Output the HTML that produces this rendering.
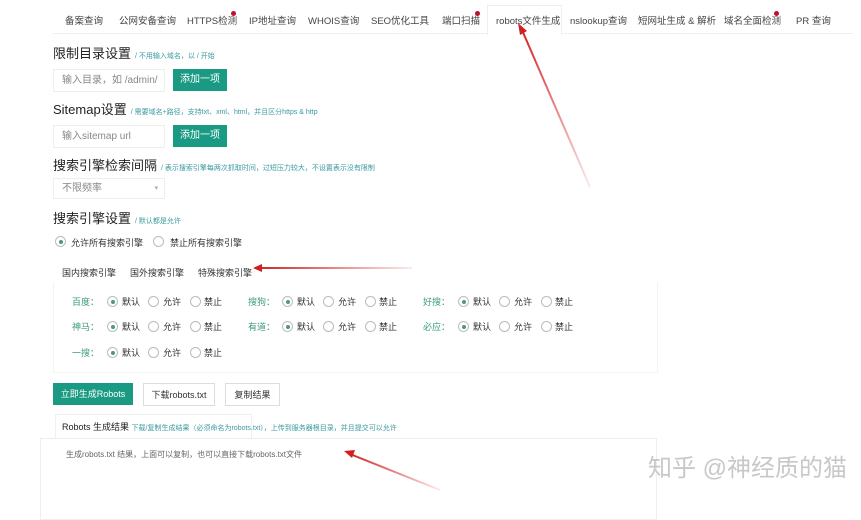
<!DOCTYPE html><html><head><meta charset="utf-8"><style>
body{margin:0;width:861px;height:500px;background:#fff;overflow:hidden;position:relative;font-family:"Liberation Sans","Noto Sans CJK SC",sans-serif;color:#333}
.a{position:absolute;white-space:nowrap}
.t{font-size:9.5px;color:#444;top:13px}
.h{font-size:13px;color:#222}
.h small{font-size:7px;color:#3a9aa0;margin-left:4px}
.in{border:1px solid #eee;font-size:10px;color:#888;padding-left:8px;line-height:22px;box-sizing:border-box}
.btn{background:#1a9a82;color:#fff;font-size:10px;text-align:center;line-height:22px}
.wb{border:1px solid #ddd;font-size:9px;color:#333;text-align:center;line-height:22px;box-sizing:border-box;background:#fff}
.r{width:11px;height:11px;border:1px solid #bbb;border-radius:50%;box-sizing:border-box}
.r.c::after{content:"";position:absolute;left:2.5px;top:2.5px;width:4px;height:4px;border-radius:50%;background:#4a9a80}
.l{font-size:9px;color:#333}
.g{font-size:9px;color:#3a9a80}
.dot{width:5px;height:5px;border-radius:50%;background:#c0102a}
</style></head><body>
<div class="a" style="left:53px;top:33px;width:800px;height:1px;background:#f0f0f0"></div>
<div class="a" style="left:487px;top:5px;width:73px;height:29px;border:1px solid #eee;border-bottom:none;background:#fff"></div>
<div class="a t" style="left:65px">备案查询</div>
<div class="a t" style="left:119px">公网安备查询</div>
<div class="a t" style="left:187px">HTTPS检测</div><div class="a dot" style="left:231px;top:11px"></div>
<div class="a t" style="left:249px">IP地址查询</div>
<div class="a t" style="left:308px">WHOIS查询</div>
<div class="a t" style="left:371px">SEO优化工具</div>
<div class="a t" style="left:442px">端口扫描</div><div class="a dot" style="left:475px;top:11px"></div>
<div class="a t" style="left:496px">robots文件生成</div>
<div class="a t" style="left:570px">nslookup查询</div>
<div class="a t" style="left:638px">短网址生成 &amp; 解析</div>
<div class="a t" style="left:724px">域名全面检测</div><div class="a dot" style="left:774px;top:11px"></div>
<div class="a t" style="left:796px">PR 查询</div>

<div class="a h" style="left:53px;top:43px">限制目录设置<small>/ 不用输入域名，以 / 开始</small></div>
<div class="a in" style="left:53px;top:69px;width:112px;height:23px">输入目录，如 /admin/</div>
<div class="a btn" style="left:173px;top:69px;width:54px;height:22px">添加一项</div>
<div class="a h" style="left:53px;top:99px">Sitemap设置<small>/ 需要域名+路径，支持txt、xml、html，并且区分https &amp; http</small></div>
<div class="a in" style="left:53px;top:125px;width:112px;height:23px">输入sitemap url</div>
<div class="a btn" style="left:173px;top:125px;width:54px;height:22px">添加一项</div>
<div class="a h" style="left:53px;top:155px">搜索引擎检索间隔<small>/ 表示搜索引擎每两次抓取时间，过短压力较大，不设置表示没有限制</small></div>
<div class="a in" style="left:53px;top:178px;width:112px;height:21px;line-height:19px">不限频率<span style="position:absolute;right:6px;color:#aaa;font-size:7px">▾</span></div>
<div class="a h" style="left:53px;top:208px">搜索引擎设置<small>/ 默认都是允许</small></div>
<div class="a r c" style="left:55px;top:236px"></div><div class="a l" style="left:71px;top:236px">允许所有搜索引擎</div>
<div class="a r" style="left:153px;top:236px"></div><div class="a l" style="left:170px;top:236px">禁止所有搜索引擎</div>
<div class="a l" style="left:62px;top:266px">国内搜索引擎</div>
<div class="a l" style="left:130px;top:266px">国外搜索引擎</div>
<div class="a l" style="left:198px;top:266px">特殊搜索引擎</div>
<div class="a" style="left:53px;top:282px;width:603px;height:90px;border:1px solid #f3f3f3;border-top:none"></div>

<div id="rows"></div>
<script>
var cols=[[72,107],[248,282],[423,458]];
var data=[[0,301,"百度："],[1,301,"搜狗："],[2,301,"好搜："],[0,326,"神马："],[1,326,"有道："],[2,326,"必应："],[0,352,"一搜："]];
var h="";
data.forEach(function(d){var c=cols[d[0]],y=d[1]-6,x=c[1];
h+='<div class="a g" style="left:'+c[0]+'px;top:'+y+'px">'+d[2]+'</div>';
h+='<div class="a r c" style="left:'+x+'px;top:'+(y+1)+'px"></div><div class="a l" style="left:'+(x+15)+'px;top:'+y+'px">默认</div>';
h+='<div class="a r" style="left:'+(x+41)+'px;top:'+(y+1)+'px"></div><div class="a l" style="left:'+(x+56)+'px;top:'+y+'px">允许</div>';
h+='<div class="a r" style="left:'+(x+83)+'px;top:'+(y+1)+'px"></div><div class="a l" style="left:'+(x+97)+'px;top:'+y+'px">禁止</div>';});
document.getElementById("rows").innerHTML=h;
</script>

<div class="a btn" style="left:53px;top:383px;width:80px;height:22px;font-size:9px">立即生成Robots</div>
<div class="a wb" style="left:143px;top:383px;width:72px;height:23px">下载robots.txt</div>
<div class="a wb" style="left:225px;top:383px;width:55px;height:23px">复制结果</div>
<div class="a" style="left:55px;top:414px;width:195px;height:24px;border:1px solid #f0f0f0;border-bottom:none"></div>
<div class="a" style="left:62px;top:420px;font-size:9px;color:#222">Robots 生成结果 <span style="font-size:7px;color:#3a9aa0">下载/复制生成结果（必须命名为robots.txt），上传到服务器根目录，并且提交可以允许</span></div>
<div class="a" style="left:40px;top:438px;width:615px;height:80px;border:1px solid #eee"></div>
<div class="a" style="left:66px;top:449px;font-size:8px;color:#666">生成robots.txt 结果，上面可以复制，也可以直接下载robots.txt文件</div>
<div class="a" style="left:648px;top:448px;font-size:24px;color:#c8c8c8">知乎 @神经质的猫</div>

<svg class="a" style="left:0;top:0" width="861" height="500">
<defs><linearGradient id="g1" x1="520" y1="28" x2="590" y2="185" gradientUnits="userSpaceOnUse"><stop offset="0" stop-color="#d02020"/><stop offset="1" stop-color="#d02020" stop-opacity="0.1"/></linearGradient>
<linearGradient id="g2" x1="255" y1="268" x2="410" y2="268" gradientUnits="userSpaceOnUse"><stop offset="0" stop-color="#d02020"/><stop offset="1" stop-color="#d02020" stop-opacity="0.1"/></linearGradient>
<linearGradient id="g3" x1="350" y1="453" x2="440" y2="488" gradientUnits="userSpaceOnUse"><stop offset="0" stop-color="#d02020"/><stop offset="1" stop-color="#d02020" stop-opacity="0.1"/></linearGradient></defs>
<line x1="522" y1="30" x2="590" y2="187" stroke="url(#g1)" stroke-width="2"/>
<polygon points="518,23 520,35 527,31" fill="#d02020"/>
<line x1="258" y1="268" x2="412" y2="268" stroke="url(#g2)" stroke-width="2"/>
<polygon points="253,268 262,264 262,272" fill="#d02020"/>
<line x1="350" y1="454" x2="440" y2="490" stroke="url(#g3)" stroke-width="2"/>
<polygon points="344,451 355,450 352,458" fill="#d02020"/>
</svg>
</body></html>
